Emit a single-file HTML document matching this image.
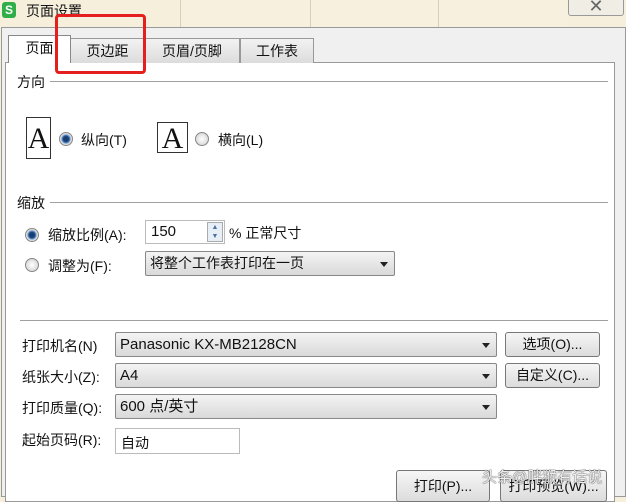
<!DOCTYPE html>
<html><head><meta charset="utf-8"><style>
*{box-sizing:border-box;margin:0;padding:0}
body{width:626px;height:497px;overflow:hidden;position:relative;background:#f5efdc;font-family:"Liberation Sans","Noto Sans CJK SC",sans-serif;font-size:14px;color:#111}
.a{position:absolute}
.cell{position:absolute;top:0;height:28px;border-left:1px solid #d8cfb4;background:#f7f0de}
.dlg{left:1px;top:27px;width:625px;height:470px;background:#f0f0f0;border:1px solid #999}
.panel{left:5px;top:62px;width:610px;height:440px;background:#fff;border:1px solid #999}
.tab{top:38px;height:25px;border:1px solid #999;border-bottom:none;background:linear-gradient(#f2f2f2,#dcdcdc);text-align:center;line-height:24px;font-size:14px}
.sel{background:linear-gradient(#f4f4f4,#d9d9d9);border:1px solid #888;border-radius:2px;height:25px;line-height:23px;padding-left:4px;font-size:14px}
.arr{position:absolute;right:6px;top:10px;border-left:4px solid transparent;border-right:4px solid transparent;border-top:5px solid #222}
.btn{background:linear-gradient(#f6f6f6,#dcdcdc);border:1px solid #777;border-radius:3px;text-align:center;height:25px;line-height:23px;font-size:14px}
.rad{width:14px;height:14px;border-radius:50%;border:1px solid #888;background:radial-gradient(#fff,#ccc)}
.rad.on{background:radial-gradient(#1a3e6e 30%,#4a86c8 45%,#ddd 60%)}
.line{height:1px;background:#a0a0a0}
.inp{background:#fff;border:1px solid #bbb}
.page{border:1px solid #333;background:#fff;font-family:"Liberation Serif",serif;font-size:30px;text-align:center}
</style></head><body>
<div class="cell" style="left:180px;width:130px"></div>
<div class="cell" style="left:310px;width:128px"></div>
<div class="cell" style="left:438px;width:130px"></div>
<div class="a" style="left:568px;top:-4px;width:56px;height:20px;border:1px solid #999;border-radius:3px;background:#f0ede5;text-align:center;font-size:18px;line-height:18px;color:#666">✕</div>
<div class="a" style="left:2px;top:2px;width:14px;height:16px;background:#2fae4a;border-radius:3px;color:#fff;font-size:12px;text-align:center;line-height:16px;font-weight:bold">S</div>
<div class="a" style="left:26px;top:1px;font-size:14px">页面设置</div>
<div class="a dlg"></div>
<div class="a panel"></div>
<div class="a tab" style="left:70px;width:75px">页边距</div>
<div class="a tab" style="left:144px;width:96px">页眉/页脚</div>
<div class="a tab" style="left:240px;width:74px">工作表</div>
<div class="a tab" style="left:8px;width:63px;top:35px;height:28px;background:#fff;border-color:#888">页面</div>
<div class="a" style="left:55px;top:14px;width:91px;height:60px;border:3px solid #e51e1e;border-radius:4px"></div>
<div class="a" style="left:17px;top:72px">方向</div>
<div class="a line" style="left:50px;top:81px;width:558px"></div>
<div class="a page" style="left:26px;top:117px;width:25px;height:42px;line-height:42px">A</div>
<div class="a rad on" style="left:59px;top:132px"></div>
<div class="a" style="left:81px;top:130px">纵向(T)</div>
<div class="a page" style="left:157px;top:122px;width:31px;height:31px;line-height:31px">A</div>
<div class="a rad" style="left:195px;top:132px"></div>
<div class="a" style="left:218px;top:130px">横向(L)</div>
<div class="a" style="left:17px;top:193px">缩放</div>
<div class="a line" style="left:50px;top:202px;width:558px"></div>
<div class="a rad on" style="left:25px;top:228px"></div>
<div class="a" style="left:48px;top:225px">缩放比例(A):</div>
<div class="a inp" style="left:145px;top:220px;width:80px;height:24px;padding:2px 5px;font-size:15px">150</div>
<div class="a" style="left:207px;top:222px;width:16px;height:20px;border:1px solid #aaa;background:#e8eef6;font-size:7px;color:#4a6fa0;text-align:center;line-height:9px">▲<br>▼</div>
<div class="a" style="left:229px;top:223px">% 正常尺寸</div>
<div class="a rad" style="left:25px;top:258px"></div>
<div class="a" style="left:48px;top:256px">调整为(F):</div>
<div class="a sel" style="left:145px;top:251px;width:250px">将整个工作表打印在一页<i class="arr"></i></div>
<div class="a line" style="left:20px;top:320px;width:588px"></div>
<div class="a" style="left:22px;top:336px">打印机名(N)</div>
<div class="a sel" style="left:115px;top:332px;width:382px;font-size:15px">Panasonic KX-MB2128CN<i class="arr"></i></div>
<div class="a btn" style="left:505px;top:332px;width:95px">选项(O)...</div>
<div class="a" style="left:22px;top:367px">纸张大小(Z):</div>
<div class="a sel" style="left:115px;top:363px;width:382px;font-size:15px">A4<i class="arr"></i></div>
<div class="a btn" style="left:505px;top:363px;width:95px">自定义(C)...</div>
<div class="a" style="left:22px;top:398px">打印质量(Q):</div>
<div class="a sel" style="left:115px;top:394px;width:382px;font-size:15px">600 点/英寸<i class="arr"></i></div>
<div class="a" style="left:22px;top:430px">起始页码(R):</div>
<div class="a inp" style="left:115px;top:428px;width:125px;height:26px;padding:4px 5px">自动</div>
<div class="a btn" style="left:396px;top:470px;width:94px;height:32px;line-height:30px">打印(P)...</div>
<div class="a btn" style="left:500px;top:470px;width:107px;height:32px;line-height:30px">打印预览(W)...</div>
<div class="a" style="left:482px;top:466px;font-size:15px;color:#eee;text-shadow:0 0 1px #444,0 0 1px #444">头条@胖猴有话说</div>
</body></html>
